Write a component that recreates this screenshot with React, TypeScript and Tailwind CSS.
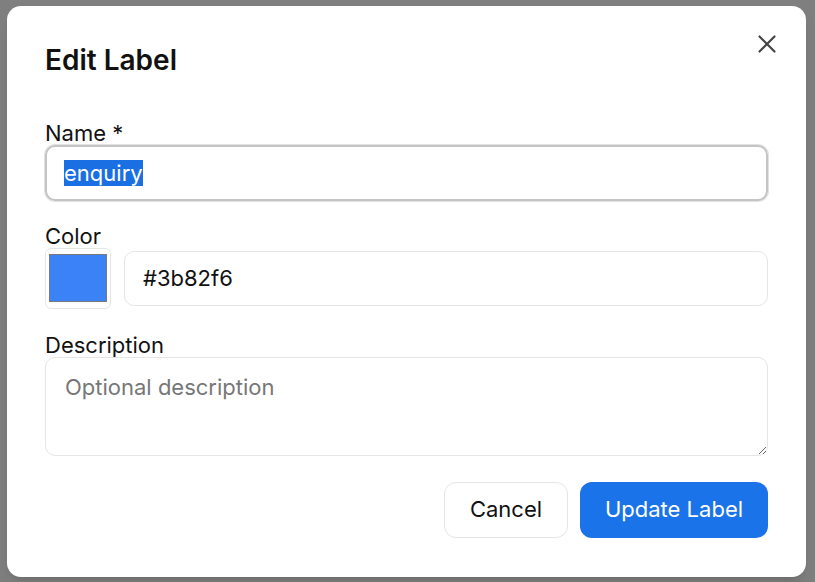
import React, { useEffect, useRef } from 'react';

const App: React.FC = () => {
  const nameRef = useRef<HTMLInputElement>(null);

  useEffect(() => {
    nameRef.current?.focus();
    nameRef.current?.select();
  }, []);

  return (
    <div className="flex h-[582px] w-full items-center bg-[#7f7f7f] pl-[7px] font-['Inter',sans-serif] text-[#111]">
      <div className="relative flex h-[571px] w-[799px] flex-col rounded-[14px] bg-white px-[38px] pt-[38px] pb-[39px] shadow-lg">
        <h2 className="text-[28px] leading-[32px] font-semibold">Edit Label</h2>
        <button className="absolute top-[23px] right-[24px] flex h-[30px] w-[30px] items-center justify-center text-[#444]">
          <svg width="30" height="30" viewBox="0 0 24 24" fill="none" stroke="currentColor" strokeWidth="1.7" strokeLinecap="round">
            <path d="M18 6 6 18" />
            <path d="m6 6 12 12" />
          </svg>
        </button>

        <div className="mt-[45px] flex flex-col">
          <label className="text-[22px] leading-[24px]">Name *</label>
          <input
            ref={nameRef}
            defaultValue="enquiry"
            className="h-[56px] rounded-[10px] border-2 border-[#c4c4c4] px-[17px] text-[22px] outline-none ring-1 ring-[#e2e2e2] selection:bg-[#1a6fe3] selection:text-white"
          />
        </div>

        <div className="mt-[23px] flex flex-col">
          <label className="text-[22px] leading-[24px]">Color</label>
          <div className="flex h-[61px] items-center gap-[13px]">
            <div className="flex h-[61px] w-[66px] items-center justify-center rounded-[6px] border border-[#e5e5e5]">
              <div className="h-[48px] w-[58px] border border-[#7a7a7a] bg-[#3b82f6]" />
            </div>
            <input
              defaultValue="#3b82f6"
              className="h-[55px] flex-1 rounded-[10px] border border-[#e5e5e5] px-[18px] text-[22px] outline-none"
            />
          </div>
        </div>

        <div className="mt-[24px] flex flex-col">
          <label className="text-[22px] leading-[24px]">Description</label>
          <textarea
            placeholder="Optional description"
            className="h-[99px] rounded-[10px] border border-[#e5e5e5] px-[19px] pt-[14px] text-[22px] leading-[30px] outline-none placeholder:text-[#777]"
          />
        </div>

        <div className="mt-[26px] flex justify-end gap-[12px]">
          <button className="h-[56px] w-[124px] rounded-[12px] border border-[#e5e5e5] bg-white text-[22px]">
            Cancel
          </button>
          <button className="h-[56px] w-[188px] rounded-[12px] bg-[#1a73e8] text-[22px] text-white">
            Update Label
          </button>
        </div>
      </div>
    </div>
  );
};

export default App;
